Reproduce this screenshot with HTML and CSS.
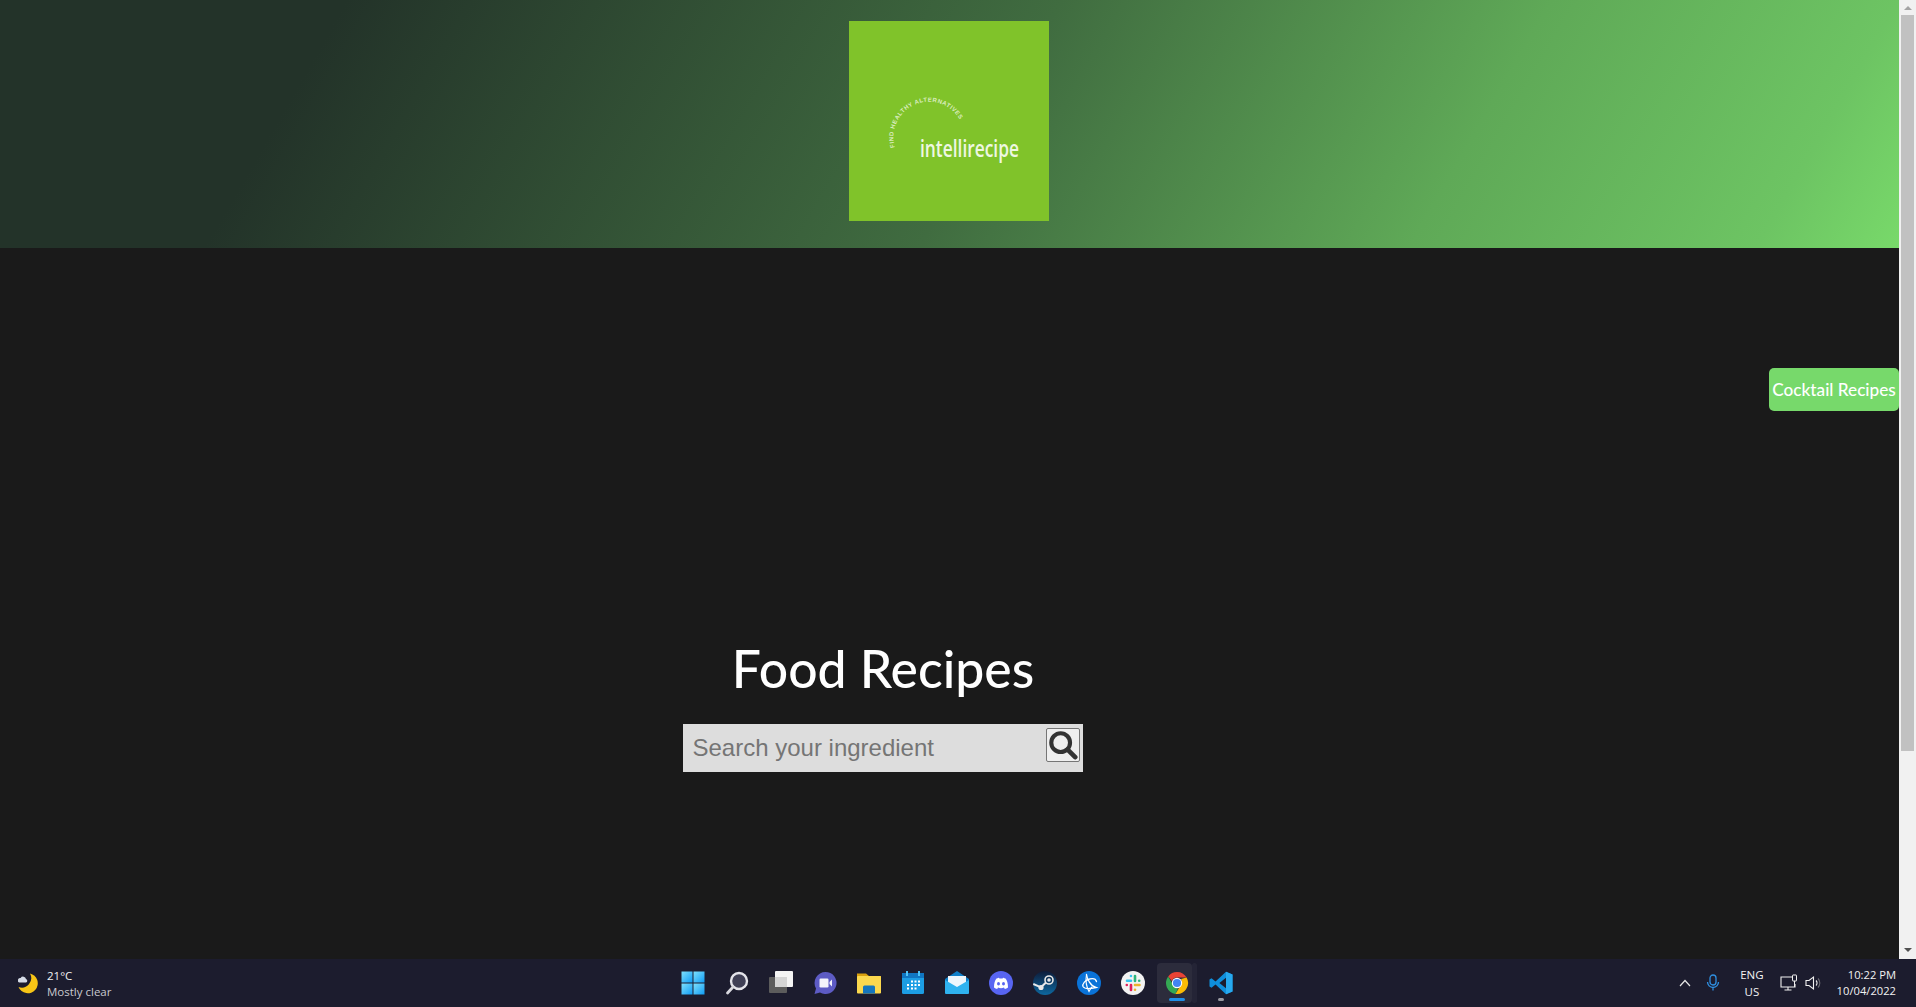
FILE: index.html
```html
<!DOCTYPE html>
<html lang="en">
<head>
  <meta charset="UTF-8" />
  <meta name="viewport" content="width=device-width, initial-scale=1.0" />
  <title>Intellirecipe</title>
  <link rel="stylesheet" href="styles.css">
</head>
<body>
  <div class="window">
    <div class="page">
      <header class="banner">
        <svg class="logo" viewBox="0 0 200 200" role="img" aria-label="Intellirecipe logo">
          <rect width="200" height="200" fill="#80c32a" />
          <path id="logoArc" d="M 45.9 126.4 A 35.5 35.5 0 0 1 111 99.1" fill="none" />
          <text class="logo-tag"><textPath href="#logoArc" textLength="103" lengthAdjust="spacing">FIND HEALTHY ALTERNATIVES</textPath></text>
          <text class="logo-name" x="71" y="136" textLength="99" lengthAdjust="spacingAndGlyphs">intellirecipe</text>
        </svg>
      </header>
      <main class="content">
        <section class="search-area">
          <h1>Food Recipes</h1>
          <form class="search-box">
            <input type="text" placeholder="Search your ingredient">
            <button type="button" aria-label="Search">
              <svg viewBox="0 0 32 32" width="30" height="30">
                <circle cx="13.5" cy="13.5" r="10" fill="none" stroke="#333" stroke-width="4.4" />
                <path d="M21 21 L29 29" stroke="#333" stroke-width="5" stroke-linecap="round" />
              </svg>
            </button>
          </form>
        </section>
        <aside class="side-link">
          <a href="#">Cocktail Recipes</a>
        </aside>
      </main>
    </div>
    <div class="scrollbar">
      <span class="arrow up"></span>
      <div class="track"><div class="thumb"></div></div>
      <span class="arrow down"></span>
    </div>
  </div>

  <footer class="taskbar">
    <div class="weather">
      <svg viewBox="0 0 24 24" width="24" height="24">
        <path d="M15 2.5 A10 10 0 1 1 3.5 16 A9.5 9.5 0 0 0 15 2.5 Z" fill="#f7c516" />
        <path d="M3 9.5 a2.4 2.4 0 0 1 2.6 -2.6 a3 3 0 0 1 5.4 1 a1.9 1.9 0 0 1 0 3.6 H4.4 a1.6 1.6 0 0 1 -1.4 -2 Z" fill="#d5dbe6" />
      </svg>
      <div class="weather-text">
        <span>21°C</span>
        <span class="dim">Mostly clear</span>
      </div>
    </div>

    <div class="apps">
      <div class="app">
        <svg viewBox="0 0 24 24" width="24" height="24">
          <defs><linearGradient id="winBlue" x1="0" y1="0" x2="1" y2="1"><stop offset="0" stop-color="#7fe0fb" /><stop offset="1" stop-color="#0f9cf5" /></linearGradient></defs>
          <rect x="0.5" y="0.5" width="11" height="11" fill="url(#winBlue)" />
          <rect x="12.5" y="0.5" width="11" height="11" fill="url(#winBlue)" />
          <rect x="0.5" y="12.5" width="11" height="11" fill="url(#winBlue)" />
          <rect x="12.5" y="12.5" width="11" height="11" fill="url(#winBlue)" />
        </svg>
      </div>
      <div class="app">
        <svg viewBox="0 0 24 24" width="24" height="24">
          <circle cx="14" cy="10" r="8" fill="#3f3f55" stroke="#e4e4ea" stroke-width="2.4" />
          <path d="M8 16 L2.5 22" stroke="#d8d8de" stroke-width="2.8" stroke-linecap="round" />
        </svg>
      </div>
      <div class="app">
        <svg viewBox="0 0 24 24" width="24" height="24">
          <rect x="0" y="6" width="18" height="16" rx="1" fill="#5c5c5c" />
          <rect x="6" y="0" width="18" height="16" rx="1" fill="#f4f4f4" />
          <rect x="6" y="6" width="12" height="10" fill="#d4d4d4" />
        </svg>
      </div>
      <div class="app">
        <svg viewBox="0 0 24 24" width="24" height="24">
          <path d="M12.5 1 A11 11 0 1 1 7 21.5 L1.5 23 L3 17.5 A11 11 0 0 1 12.5 1 Z" fill="#5d5bc4" />
          <rect x="6.5" y="7.5" width="9" height="9" rx="1.2" fill="#f4f4fb" />
          <path d="M16.5 11 L19 8.5 V15.5 L16.5 13 Z" fill="#f4f4fb" />
        </svg>
      </div>
      <div class="app">
        <svg viewBox="0 0 24 24" width="24" height="24">
          <path d="M0 2.5 H9 L12 5 H24 V22 H0 Z" fill="#d9a00f" />
          <rect x="0" y="5" width="24" height="17.5" rx="1" fill="#fbd84e" />
          <path d="M6 16 a1.5 1.5 0 0 1 1.5 -1.5 H16.5 a1.5 1.5 0 0 1 1.5 1.5 V22.5 H6 Z" fill="#1576bd" />
        </svg>
      </div>
      <div class="app">
        <svg viewBox="0 0 24 24" width="24" height="24">
          <rect x="1" y="2" width="22" height="21" rx="1.5" fill="#1c9de4" />
          <rect x="1" y="2" width="22" height="5" fill="#1076c2" />
          <rect x="5" y="0" width="2" height="5" fill="#4fc3f7" />
          <rect x="17" y="0" width="2" height="5" fill="#4fc3f7" />
          <g fill="#ffffff">
            <rect x="10" y="9.5" width="2" height="2" /><rect x="13.5" y="9.5" width="2" height="2" /><rect x="17" y="9.5" width="2" height="2" />
            <rect x="6" y="13" width="2" height="2" /><rect x="10" y="13" width="2" height="2" /><rect x="13.5" y="13" width="2" height="2" /><rect x="17" y="13" width="2" height="2" />
            <rect x="6" y="16.5" width="2" height="2" /><rect x="10" y="16.5" width="2" height="2" /><rect x="13.5" y="16.5" width="2" height="2" />
          </g>
        </svg>
      </div>
      <div class="app">
        <svg viewBox="0 0 24 24" width="24" height="24">
          <path d="M0 8 L12 0 L24 8 V22 H0 Z" fill="#0f7fc9" />
          <path d="M3 5 H21 V15 L12 20 L3 15 Z" fill="#eef6fc" />
          <path d="M0 9 L12 16 L24 9 V22 a1 1 0 0 1 -1 1 H1 a1 1 0 0 1 -1 -1 Z" fill="#2fb2ef" />
        </svg>
      </div>
      <div class="app">
        <svg viewBox="0 0 24 24" width="24" height="24">
          <circle cx="12" cy="12" r="12" fill="#5865f2" />
          <path d="M5 16.5 C5 12 6 9 7.5 7.5 C9 7 9.5 6.8 10 6.8 L10.4 7.6 H13.6 L14 6.8 C14.5 6.8 15 7 16.5 7.5 C18 9 19 12 19 16.5 C18 17.4 16.8 17.8 15.8 18 L15 16.6 C13 17.3 11 17.3 9 16.6 L8.2 18 C7.2 17.8 6 17.4 5 16.5 Z" fill="#fff" />
          <ellipse cx="9.5" cy="12.8" rx="1.5" ry="1.7" fill="#5865f2" />
          <ellipse cx="14.5" cy="12.8" rx="1.5" ry="1.7" fill="#5865f2" />
        </svg>
      </div>
      <div class="app">
        <svg viewBox="0 0 24 24" width="24" height="24">
          <defs><linearGradient id="steamBlue" x1="0" y1="0" x2="0" y2="1"><stop offset="0" stop-color="#0e1c3a" /><stop offset="1" stop-color="#0d689f" /></linearGradient></defs>
          <circle cx="12" cy="12" r="12" fill="url(#steamBlue)" />
          <circle cx="16" cy="9" r="4" fill="none" stroke="#e8e8e8" stroke-width="1.6" />
          <circle cx="16" cy="9" r="1.8" fill="#e8e8e8" />
          <path d="M0.3 13 L8 16.3 L13 11.5" fill="none" stroke="#e8e8e8" stroke-width="2" />
          <circle cx="8" cy="16.5" r="2.6" fill="#e8e8e8" />
        </svg>
      </div>
      <div class="app">
        <svg viewBox="0 0 24 24" width="24" height="24">
          <circle cx="12" cy="12" r="12" fill="#0a73d8" />
          <path d="M9.5 3.5 C10 8 13.5 15 19 16.5 C15 17.5 8 19 6 15.5 C5 13.5 8 9 12.5 8 C16.5 7 19 8.5 19.5 10.5" fill="none" stroke="#fff" stroke-width="1.3" stroke-linecap="round" />
          <path d="M9.5 3.5 C8.5 9 9 15 12 20.5 C13 18.5 14 17 15 16" fill="none" stroke="#fff" stroke-width="1.1" stroke-linecap="round" />
        </svg>
      </div>
      <div class="app">
        <svg viewBox="0 0 24 24" width="24" height="24">
          <circle cx="12" cy="12" r="12" fill="#f3f3f3" />
          <g stroke-width="2.6" stroke-linecap="round">
            <path d="M10 5 V5 M6 9.8 H10" stroke="#36c5f0" />
            <path d="M14 5 V10" stroke="#2eb67d" />
            <path d="M18.2 9.8 H18.2" stroke="#2eb67d" />
            <path d="M14 14 H18.5" stroke="#ecb22e" />
            <path d="M14 18.8 V18.8" stroke="#ecb22e" />
            <path d="M10 14 V19" stroke="#e01e5a" />
            <path d="M5.8 14 H5.8" stroke="#e01e5a" />
          </g>
        </svg>
      </div>
      <div class="app active">
        <svg viewBox="0 0 24 24" width="24" height="24">
          <path d="M12 1 A11 11 0 0 1 21.6 6.6 H12 A5.5 5.5 0 0 0 6.9 10 L3.2 5.4 A11 11 0 0 1 12 1 Z" fill="#ea4335" />
          <path d="M3.2 5.4 L8 13.7 A5.5 5.5 0 0 0 13 17.5 L10.4 22.9 A11 11 0 0 1 3.2 5.4 Z" fill="#34a853" />
          <path d="M21.6 6.6 A11 11 0 0 1 10.4 22.9 L15.8 13.9 A5.5 5.5 0 0 0 16 8 Z" fill="#fbbc05" />
          <circle cx="12" cy="12" r="5.2" fill="#fff" />
          <circle cx="12" cy="12" r="4.1" fill="#4285f4" />
        </svg>
        <span class="running blue"></span>
      </div>
      <div class="app">
        <svg viewBox="0 0 24 24" width="24" height="24">
          <path d="M17 0.8 L23.5 3.4 V20.6 L17 23.2 L6.5 13.5 L2.5 16.8 L0.5 15.6 V8.4 L2.5 7.2 L6.5 10.5 Z M17 6.8 L10.4 12 L17 17.2 Z" fill="#0f8fdc" fill-rule="evenodd" />
          <path d="M17 0.8 L23.5 3.4 V20.6 L17 23.2 Z" fill="#27a9ef" />
        </svg>
        <span class="running"></span>
      </div>
    </div>

    <div class="tray">
      <svg class="tray-chevron" viewBox="0 0 12 8" width="12" height="8"><path d="M1 7 L6 1.5 L11 7" fill="none" stroke="#e6e6e6" stroke-width="1.2" /></svg>
      <svg class="tray-mic" viewBox="0 0 14 18" width="14" height="18">
        <rect x="4" y="1" width="6" height="10" rx="3" fill="none" stroke="#2f8fe0" stroke-width="1.3" />
        <path d="M1.5 8 A5.5 5.5 0 0 0 12.5 8 M7 13.5 V16.5" fill="none" stroke="#2f8fe0" stroke-width="1.3" />
      </svg>
      <div class="lang"><span>ENG</span><span>US</span></div>
      <svg class="tray-net" viewBox="0 0 18 18" width="18" height="18">
        <path d="M12 3 H1 V13 H15 V10 M8 13 V16 M4.5 16 H11.5" fill="none" stroke="#f0f0f0" stroke-width="1.1" />
        <rect x="12.5" y="1" width="4" height="6" rx="0.5" fill="none" stroke="#f0f0f0" stroke-width="1" />
        <path d="M14.5 7 V13" stroke="#f0f0f0" stroke-width="1" />
      </svg>
      <svg class="tray-sound" viewBox="0 0 18 16" width="18" height="16">
        <path d="M1 5.5 H4 L8.5 2 V14 L4 10.5 H1 Z" fill="none" stroke="#f0f0f0" stroke-width="1.1" />
        <path d="M11 5.5 A3.5 3.5 0 0 1 11 10.5" fill="none" stroke="#f0f0f0" stroke-width="1.1" />
        <path d="M13 3.5 A6.5 6.5 0 0 1 13 12.5" fill="none" stroke="#6a6a72" stroke-width="1.1" />
      </svg>
      <div class="clock"><span>10:22 PM</span><span>10/04/2022</span></div>
    </div>
  </footer>
</body>
</html>
```

FILE: styles.css
```css
* {
  box-sizing: border-box;
}
html, body {
  height: 100%;
}
body {
  margin: 0;
  display: flex;
  flex-direction: column;
  overflow: hidden;
  background-color: #1a1a1a;
  font-family: 'Lato', sans-serif;
}
.window {
  flex: 1;
  display: flex;
  min-height: 0;
}
.page {
  flex: 1;
  display: flex;
  flex-direction: column;
}

/* header */
.banner {
  height: 248px;
  padding: 21px 1px 0 0;
  display: flex;
  justify-content: center;
  align-items: flex-start;
  background: linear-gradient(120deg, #233329 17%, #406c40 52%, #5fa957 76%, #6dc463 93%, #78d96a 100%);
}
.logo {
  width: 200px;
  height: 200px;
}
.logo-tag {
  font-family: 'Liberation Sans', sans-serif;
  font-size: 6px;
  font-weight: 700;
  fill: #dcedc0;
}
.logo-name {
  font-family: 'Open Sans', sans-serif;
  font-size: 23px;
  font-weight: 600;
  fill: #eef7e2;
}

/* main */
.content {
  flex: 1;
  display: flex;
  align-items: flex-start;
}
.search-area {
  flex: 1;
  padding: 387px 3px 0 0;
  display: flex;
  flex-direction: column;
  align-items: center;
}
h1 {
  margin: 0 0 23px;
  font-size: 51.7px;
  line-height: 66px;
  font-weight: 500;
  color: #fff;
}
.search-box {
  width: 400px;
  height: 48px;
  display: flex;
  align-items: flex-start;
  padding: 4px 3px 0 9.5px;
  background-color: #ddd;
}
.search-box input {
  flex: 1;
  min-width: 0;
  height: 40px;
  padding: 0;
  border: none;
  outline: none;
  background: transparent;
  font-family: 'Liberation Sans', sans-serif;
  font-size: 24px;
  color: #333;
}
.search-box input::placeholder {
  color: #757575;
}
.search-box button {
  width: 34px;
  height: 34px;
  padding: 0;
  display: flex;
  align-items: center;
  justify-content: center;
  border: 1px solid #767676;
  border-radius: 2px;
  background-color: #efefef;
}
.side-link {
  margin-top: 120px;
}
.side-link a {
  display: block;
  width: 130px;
  height: 43px;
  line-height: 43px;
  text-align: center;
  border-radius: 5px;
  background-color: #77d96b;
  color: #fff;
  font-size: 17.2px;
  font-weight: 500;
  text-decoration: none;
  white-space: nowrap;
}

/* fake scrollbar */
.scrollbar {
  width: 17px;
  display: flex;
  flex-direction: column;
  background-color: #f1f1f1;
}
.arrow {
  height: 15px;
  display: flex;
  align-items: center;
  justify-content: center;
}
.arrow.down {
  height: 18px;
}
.arrow::before {
  content: '';
  border-left: 4px solid transparent;
  border-right: 4px solid transparent;
}
.arrow.up::before {
  border-bottom: 4px solid #a3a3a3;
}
.arrow.down::before {
  border-top: 4px solid #505050;
}
.track {
  flex: 1;
  padding: 0 2px;
}
.thumb {
  height: 736px;
  background-color: #c1c1c1;
}

/* windows taskbar */
.taskbar {
  height: 48px;
  flex-shrink: 0;
  display: grid;
  grid-template-columns: 1fr auto 1fr;
  align-items: center;
  background-color: #1c1c2e;
  font-family: 'Open Sans', sans-serif;
  font-size: 11.5px;
  color: #f2f2f2;
}
.weather {
  display: flex;
  align-items: center;
  gap: 8px;
  padding-left: 15px;
}
.weather-text, .lang, .clock {
  display: flex;
  flex-direction: column;
  line-height: 16px;
}
.weather-text {
  padding-top: 1px;
}
.dim {
  color: #c9c9cf;
}
.apps {
  display: flex;
  margin-right: 2px;
}
.app {
  position: relative;
  width: 44px;
  height: 48px;
  display: flex;
  align-items: center;
  justify-content: center;
}
.app.active::before, .app.active::after {
  content: '';
  position: absolute;
  top: 4px;
  height: 40px;
  border-radius: 4px;
  background-color: rgba(255, 255, 255, 0.07);
}
.app.active::before {
  left: 2px;
  width: 35px;
}
.app.active::after {
  left: 37px;
  width: 5px;
  background-color: rgba(255, 255, 255, 0.04);
}
.app svg {
  position: relative;
}
.running {
  position: absolute;
  left: 19px;
  bottom: 6px;
  width: 6px;
  height: 3px;
  border-radius: 2px;
  background-color: #9a9aa2;
}
.running.blue {
  left: 14px;
  width: 16px;
  background-color: #1f8fe8;
}
.tray {
  display: flex;
  align-items: center;
  justify-content: flex-end;
  padding-right: 20px;
}
.tray-chevron {
  margin-right: 15px;
}
.tray-mic {
  margin-right: 20px;
}
.lang {
  align-items: center;
  margin-right: 16px;
  line-height: 17px;
}
.tray-net {
  margin-right: 7px;
}
.tray-sound {
  margin-right: 14px;
}
.clock {
  align-items: flex-end;
  font-size: 11.2px;
}
```
